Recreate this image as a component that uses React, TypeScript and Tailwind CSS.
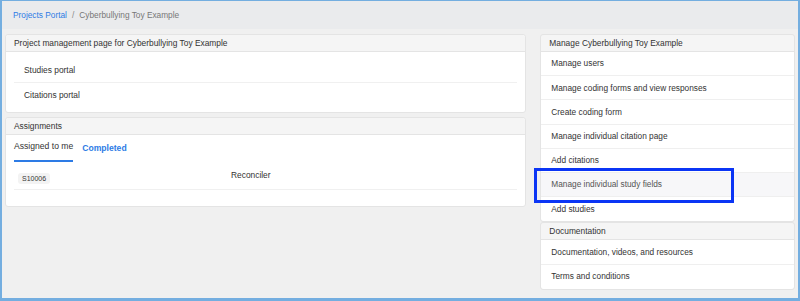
import React from 'react';

const manageItems = [
  'Manage users',
  'Manage coding forms and view responses',
  'Create coding form',
  'Manage individual citation page',
  'Add citations',
  'Manage individual study fields',
  'Add studies',
];

const docItems = ['Documentation, videos, and resources', 'Terms and conditions'];

function CardHeader({ children }: { children: React.ReactNode }) {
  return (
    <div className="flex h-[17px] items-center rounded-t-[3px] border-b border-[#e4e4e4] bg-[#f5f5f5] px-2 text-[8.4px] text-[#333]">
      {children}
    </div>
  );
}

function ListRow({ label, active, last }: { label: string; active?: boolean; last?: boolean }) {
  return (
    <div
      className={`flex h-[24.2px] items-center px-[10px] text-[8.3px] ${
        active ? 'bg-[#f7f7f9] text-[#555]' : 'bg-white text-[#333]'
      } ${last ? 'rounded-b-[3px]' : 'border-b border-[#efefef]'}`}
    >
      {label}
    </div>
  );
}

export default function App() {
  return (
    <div
      className="h-[301px] w-[800px] overflow-hidden border-t border-r-2 border-b-[3px] border-l-2 border-[#74aee0] bg-[#f0f0f0]"
      style={{ fontFamily: '"Liberation Sans", Arial, sans-serif' }}
    >
      <div className="flex h-[28px] items-center bg-[#eaebed] px-[11px] text-[8.3px]">
        <span className="font-medium text-[#2d7be5]">Projects Portal</span>
        <span className="mx-[5px] text-[#888]">/</span>
        <span className="text-[#777]">Cyberbullying Toy Example</span>
      </div>

      <div className="flex gap-[14px] px-[3px] pt-[5px]">
        <div className="flex w-[522px] flex-col gap-[4px]">
          <div className="rounded-[3px] border border-[#e4e4e4] bg-white">
            <CardHeader>Project management page for Cyberbullying Toy Example</CardHeader>
            <div className="px-2 pt-[7px] pb-[5px] text-[8.4px] text-[#333]">
              <div className="flex h-[24px] items-center border-b border-[#f0f0f0] px-[10px]">Studies portal</div>
              <div className="flex h-[24px] items-center px-[10px]">Citations portal</div>
            </div>
          </div>

          <div className="rounded-[3px] border border-[#e4e4e4] bg-white">
            <CardHeader>Assignments</CardHeader>
            <div className="px-2 pb-[16px]">
              <div className="flex h-[27px] items-end gap-[9px] text-[8.6px]">
                <div className="border-b-2 border-[#2d7be5] pb-[7px] text-[#333]">Assigned to me</div>
                <div className="pb-[7px] font-bold text-[#2d7be5]">Completed</div>
              </div>
              <div className="flex h-[28px] items-center border-b border-[#f0f0f0]">
                <div className="w-[217px] pl-[4px]">
                  <span className="rounded-[3px] bg-[#f3f3f3] px-[4px] py-[2px] text-[7px] font-medium text-[#333]">
                    S10006
                  </span>
                </div>
                <span className="text-[8.4px] text-[#333]">Reconciler</span>
              </div>
            </div>
          </div>
        </div>

        <div className="relative flex w-[255px] flex-col">
          <div className="rounded-[3px] border border-[#e4e4e4]">
            <CardHeader>Manage Cyberbullying Toy Example</CardHeader>
            {manageItems.map((item, i) => (
              <ListRow key={item} label={item} active={i === 5} last={i === manageItems.length - 1} />
            ))}
          </div>
          <div className="rounded-[3px] border border-[#e4e4e4]">
            <CardHeader>Documentation</CardHeader>
            {docItems.map((item, i) => (
              <ListRow key={item} label={item} last={i === docItems.length - 1} />
            ))}
          </div>
          <div className="absolute top-[134px] left-[-6px] h-[35px] w-[200px] border-[3px] border-[#0b35f5]" />
        </div>
      </div>
    </div>
  );
}
